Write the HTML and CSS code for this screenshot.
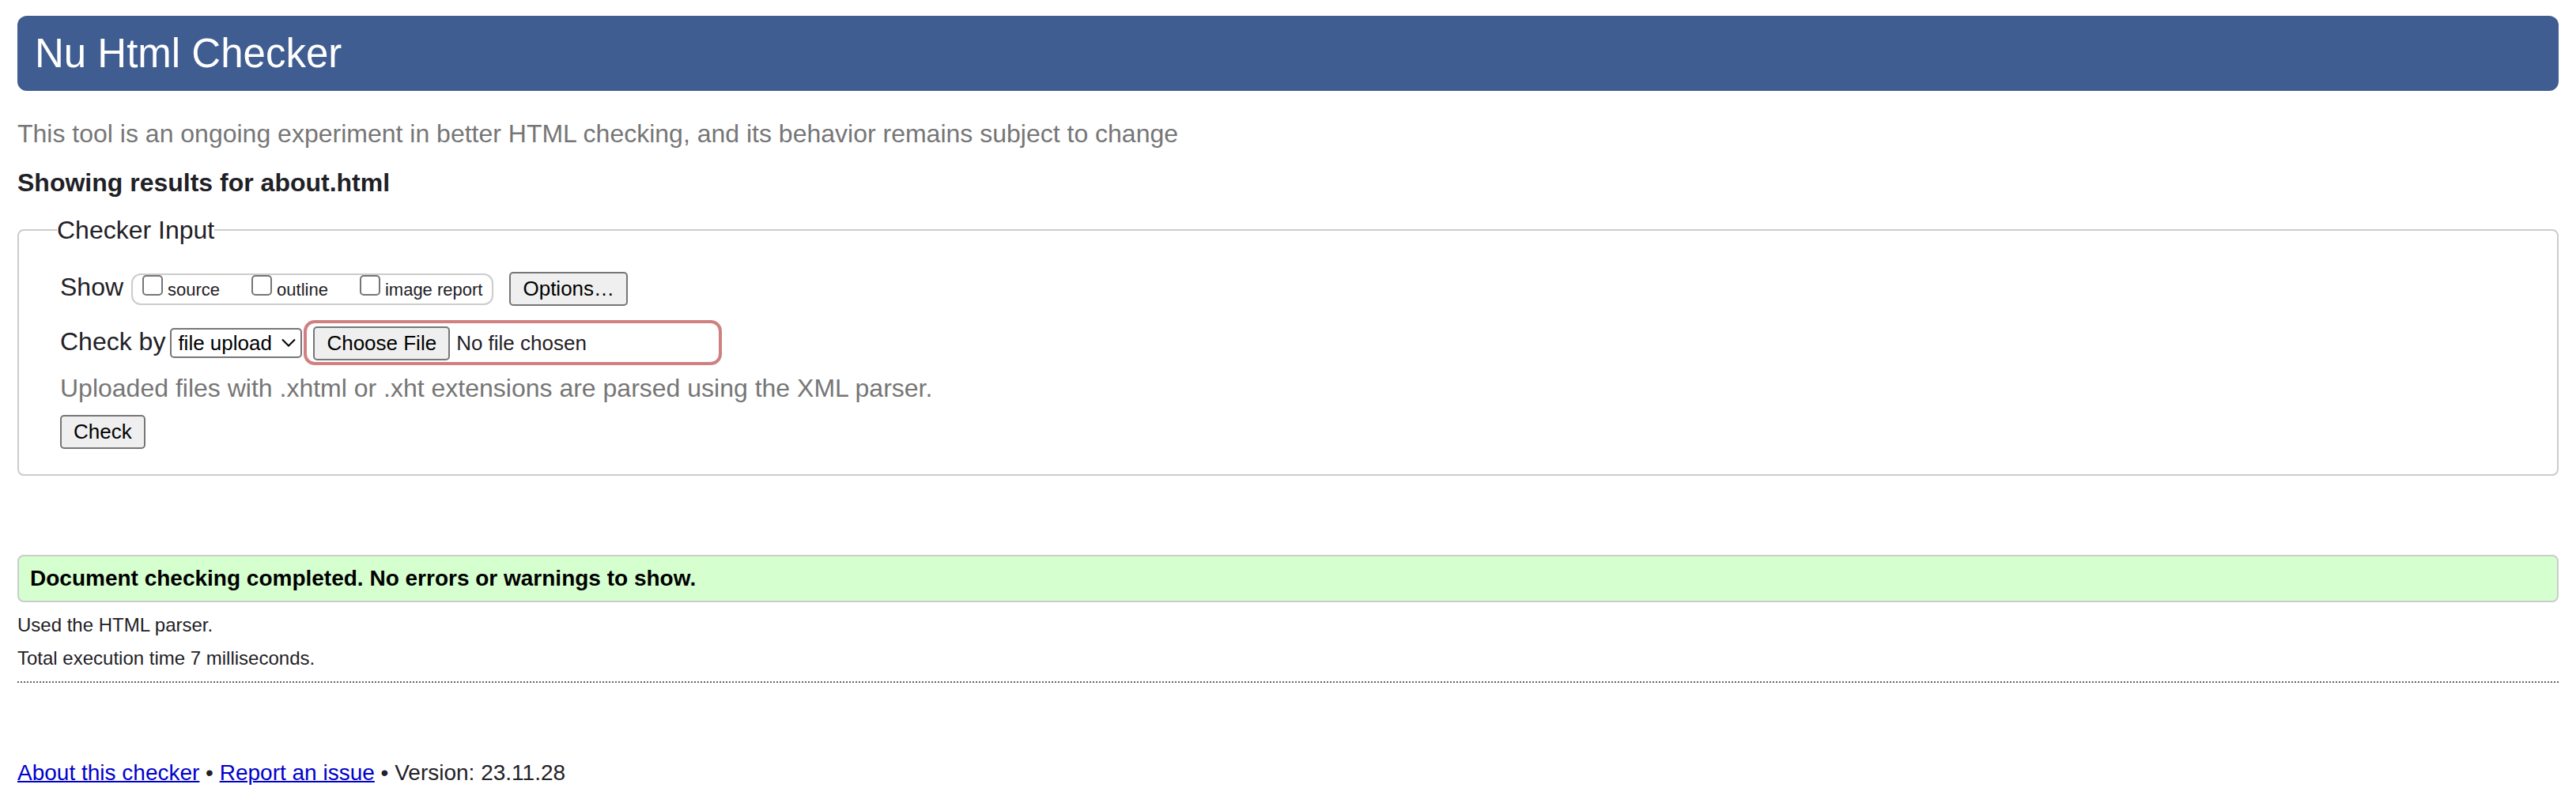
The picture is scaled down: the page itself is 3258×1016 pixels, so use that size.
FILE: index.html
```html
<!DOCTYPE html>
<html lang="en">
<head>
  <meta charset="utf-8">
  <meta name="viewport" content="width=device-width, initial-scale=1">
  <title>Showing results for about.html - Nu Html Checker</title>
  <link rel="stylesheet" href="styles.css">
</head>
<body>
  <header class="banner">
    <h1 class="banner-title">Nu Html Checker</h1>
  </header>

  <main>
    <p class="tagline">This tool is an ongoing experiment in better HTML checking, and its behavior remains subject to change</p>
    <h2 class="results-title">Showing results for about.html</h2>

    <form>
      <fieldset class="checker">
        <legend class="checker-legend">Checker Input</legend>
        <div class="checker-body">
          <div class="row show-row">
            <span>Show</span>
            <div class="show-options">
              <label class="tick"><input class="tick-box" type="checkbox" name="showsource">source</label>
              <label class="tick"><input class="tick-box" type="checkbox" name="showoutline">outline</label>
              <label class="tick"><input class="tick-box" type="checkbox" name="showimagereport">image report</label>
            </div>
            <button class="button options-button" type="button">Options…</button>
          </div>

          <div class="row input-row">
            <label for="docselect">Check by</label>
            <div class="select-wrap">
              <select class="select" id="docselect">
                <option>address</option>
                <option selected>file upload</option>
                <option>text input</option>
              </select>
              <svg class="select-arrow" viewBox="0 0 18 12" aria-hidden="true"><path d="M1 1.5L9 9.5L17 1.5" fill="none" stroke="#000" stroke-width="2"/></svg>
            </div>
            <input class="file" type="file" name="file" aria-label="File to check">
          </div>

          <p class="hint">Uploaded files with .xhtml or .xht extensions are parsed using the XML parser.</p>
          <button class="button" type="button">Check</button>
        </div>
      </fieldset>
    </form>

    <p class="success">Document checking completed. No errors or warnings to show.</p>
    <div class="details">
      <p>Used the HTML parser.</p>
      <p>Total execution time 7 milliseconds.</p>
    </div>
  </main>

  <footer class="footer">
    <a href="#about">About this checker</a> • <a href="#issues">Report an issue</a> • Version: 23.11.28
  </footer>
</body>
</html>
```
FILE: styles.css
```css
* {
  box-sizing: border-box;
}

body {
  margin: 20px 22px;
  background: #fff;
  color: #1f2126;
  font: 32px/36px "Liberation Sans", Arial, sans-serif;
}

h1, h2, p {
  margin: 0;
}

.banner {
  padding: 20px 22px;
  border-radius: 12px;
  background: #3f5d91;
  color: #fff;
}

.banner-title {
  font-size: 51px;
  line-height: 55px;
  font-weight: 400;
}

.tagline {
  margin-top: 36px;
  color: #767676;
}

.results-title {
  margin: 26px 0 24px;
  font-size: 32px;
}

/* Form */
.checker {
  margin: 0;
  padding: 0 48px 32px;
  border: 2px solid #ccc;
  border-radius: 8px;
}

.checker-legend {
  padding: 0;
}

.checker-body {
  padding: 35px 4px 0;
}

.row {
  display: flex;
  flex-wrap: wrap;
  align-items: baseline;
}

.show-row {
  gap: 10px;
}

.show-options {
  display: flex;
  gap: 40px;
  padding: 0 12px;
  border: 2px solid #ccc;
  border-radius: 12px;
  font-size: 22px;
  line-height: 35px;
}

.tick {
  display: flex;
  align-items: baseline;
  gap: 6px;
}

.tick-box {
  appearance: none;
  width: 26px;
  height: 26px;
  margin: 0;
  border: 2px solid #767676;
  border-radius: 5px;
  background: #fff;
}

.tick-box:checked {
  background: #0075ff;
}

.button,
.file::file-selector-button {
  padding: 2px 15px;
  border: 2px solid #767676;
  border-radius: 5px;
  background: #efefef;
  color: #000;
  font: 26px/35px "Liberation Sans", Arial, sans-serif;
}

.options-button {
  margin-left: 10px;
}

.input-row {
  margin-top: 18px;
  gap: 2px;
}

.select-wrap {
  position: relative;
  margin-left: 4px;
}

.select {
  appearance: none;
  display: block;
  padding: 0 36px 0 8px;
  border: 2px solid #767676;
  border-radius: 5px;
  background: #fff;
  color: #000;
  font: 26px/34px "Liberation Sans", Arial, sans-serif;
}

.select-arrow {
  position: absolute;
  top: 13px;
  right: 8px;
  width: 18px;
  height: 12px;
  pointer-events: none;
}

.file {
  width: 529px;
  max-width: 100%;
  padding: 4px 8px 2px;
  border: 4px solid #d08080;
  border-radius: 14px;
  font: 26px/35px "Liberation Sans", Arial, sans-serif;
  color: #1f2126;
}

.file::file-selector-button {
  margin: 0 8px 0 0;
}

.hint {
  margin: 11px 0 16px;
  color: #767676;
}

.checker-body > .button {
  display: block;
}

/* Results */
.success {
  margin-top: 100px;
  padding: 12px 14px;
  border: 2px solid #ccc;
  border-radius: 8px;
  background: #d6ffd0;
  color: #000;
  font-size: 28px;
  line-height: 32px;
  font-weight: 700;
}

.details {
  display: grid;
  gap: 14px;
  padding: 15px 0 17px;
  background: repeating-linear-gradient(90deg, #666 0 2px, transparent 2px 4px) bottom / 100% 2px no-repeat;
  font-size: 24px;
  line-height: 28px;
}

.footer {
  margin-top: 98px;
  font-size: 28px;
  line-height: 32px;
}

.footer a {
  color: #0000cc;
  text-decoration-thickness: 2px;
}
```
